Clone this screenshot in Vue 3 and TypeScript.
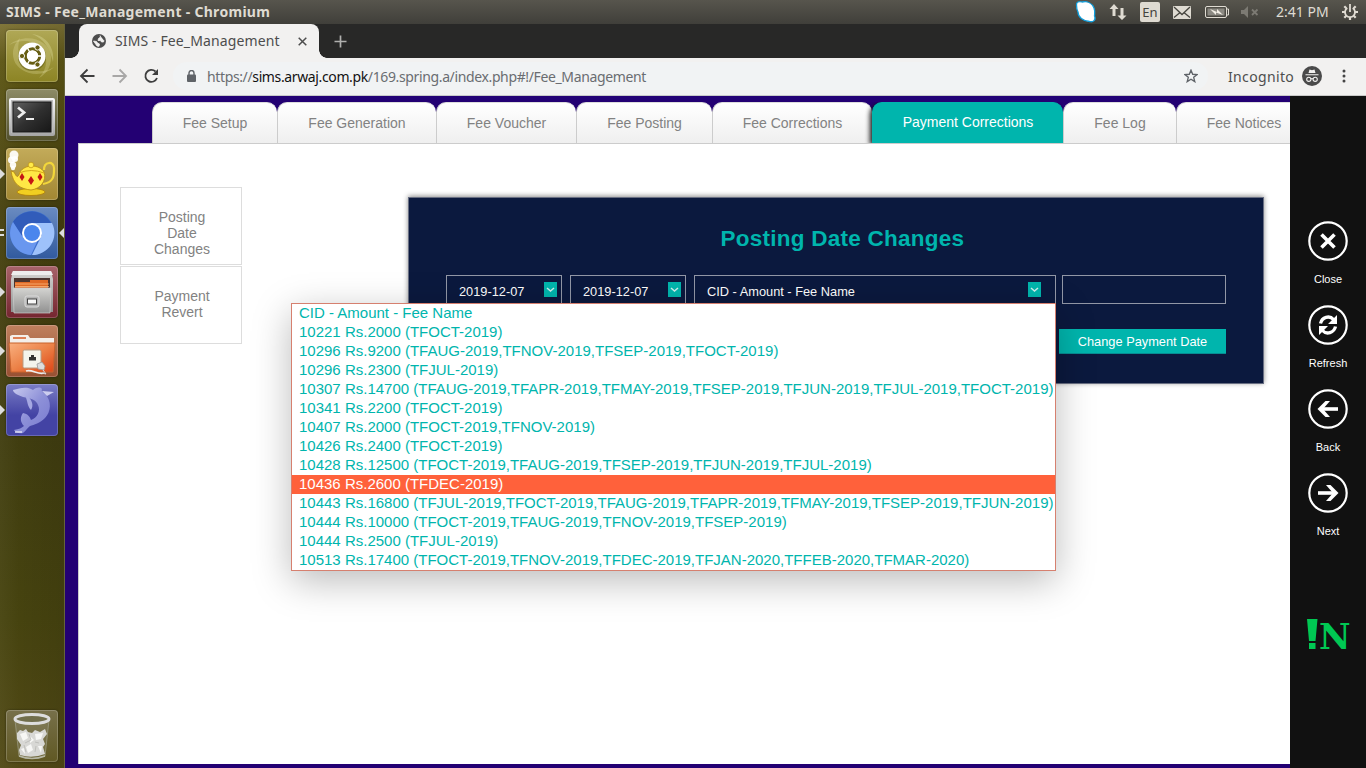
<script setup lang="ts">
interface Tab { label: string; width: number; active?: boolean }

const tabs: Tab[] = [
  { label: 'Fee Setup', width: 125 },
  { label: 'Fee Generation', width: 159 },
  { label: 'Fee Voucher', width: 140 },
  { label: 'Fee Posting', width: 136 },
  { label: 'Fee Corrections', width: 160 },
  { label: 'Payment Corrections', width: 191, active: true },
  { label: 'Fee Log', width: 113 },
  { label: 'Fee Notices', width: 135 },
]

const options: string[] = [
  'CID - Amount - Fee Name',
  '10221 Rs.2000 (TFOCT-2019)',
  '10296 Rs.9200 (TFAUG-2019,TFNOV-2019,TFSEP-2019,TFOCT-2019)',
  '10296 Rs.2300 (TFJUL-2019)',
  '10307 Rs.14700 (TFAUG-2019,TFAPR-2019,TFMAY-2019,TFSEP-2019,TFJUN-2019,TFJUL-2019,TFOCT-2019)',
  '10341 Rs.2200 (TFOCT-2019)',
  '10407 Rs.2000 (TFOCT-2019,TFNOV-2019)',
  '10426 Rs.2400 (TFOCT-2019)',
  '10428 Rs.12500 (TFOCT-2019,TFAUG-2019,TFSEP-2019,TFJUN-2019,TFJUL-2019)',
  '10436 Rs.2600 (TFDEC-2019)',
  '10443 Rs.16800 (TFJUL-2019,TFOCT-2019,TFAUG-2019,TFAPR-2019,TFMAY-2019,TFSEP-2019,TFJUN-2019)',
  '10444 Rs.10000 (TFOCT-2019,TFAUG-2019,TFNOV-2019,TFSEP-2019)',
  '10444 Rs.2500 (TFJUL-2019)',
  '10513 Rs.17400 (TFOCT-2019,TFNOV-2019,TFDEC-2019,TFJAN-2020,TFFEB-2020,TFMAR-2020)',
]
const highlighted = 9

const actions: string[] = ['Close', 'Refresh', 'Back', 'Next']
</script>

<template>
  <div class="desktop">
    <header class="menubar">
      <span class="wintitle">SIMS - Fee_Management - Chromium</span>
      <div class="tray">
        <svg class="t-skype" width="24" height="24" viewBox="0 0 24 24">
          <path d="M2.500 5C2 2 5 1 8 2C13 1 18 3 20 8C21.500 12 20.500 14 20.500 16C22.500 20 19 22.500 15.500 21.500C9 21 4 17 4 12C2.500 9 2.500 8 2.500 5Z" fill="#fff" stroke="#129fdc" stroke-width="1.300" />
        </svg>
        <svg class="t-net" width="18" height="16" viewBox="0 0 18 16">
          <path d="M5 0L9.500 5H6.500V12H3.500V5H.5ZM13 16L8.500 11.500H11.500V4H14.500V11.500H17.500Z" fill="#dfdbd2" />
        </svg>
        <span class="t-en">En</span>
        <svg class="t-mail" width="18" height="13" viewBox="0 0 18 13">
          <rect width="18" height="13" rx="1" fill="#dfdbd2" />
          <path d="M1 1L9 8.500L17 1M1 11.500L6.500 7M17 11.500L11.500 7" fill="none" stroke="#45443e" stroke-width="1.300" />
        </svg>
        <svg class="t-bat" width="24" height="12" viewBox="0 0 24 12">
          <rect x=".5" y=".5" width="21" height="11" rx="1.500" fill="none" stroke="#dfdbd2" />
          <rect x="2.500" y="2.500" width="17" height="7" fill="#8b8982" />
          <path d="M22 3H23.500V9H22" fill="none" stroke="#dfdbd2" />
          <path d="M5 3L12 6V3L18 9L11 6.500V9Z" fill="#f2eee5" />
        </svg>
        <svg class="t-vol" width="18" height="12" viewBox="0 0 18 12">
          <path d="M0 4H3L7 0V12L3 8H0Z" fill="#7c7a73" />
          <path d="M11 3.500L16.500 9M16.500 3.500L11 9" stroke="#7c7a73" stroke-width="1.800" />
        </svg>
        <span class="clock">2:41 PM</span>
        <svg class="t-gear" width="16" height="16" viewBox="0 0 16 16">
          <path d="M8 13V16M0 8H3M13 8H16M2.300 2.300L4.300 4.300M11.700 11.700L13.700 13.700M2.300 13.700L4.300 11.700M11.700 4.300L13.700 2.300" stroke="#dfdbd2" stroke-width="2.200" />
          <path d="M5.300 4A5 5 0 1 0 10.700 4M8 0V8" fill="none" stroke="#dfdbd2" stroke-width="1.800" />
        </svg>
      </div>
    </header>

    <div class="workspace">
      <aside class="launcher">
        <div class="tile ubuntu">
          <svg viewBox="0 0 52 52">
            <g fill="#f0edb4">
              <path d="M3 15C17 3 43 7 45 27C45 38 40 44 33 48C42 38 42 27 36 19C28 9 15 9 3 15Z" fill-opacity=".25" />
              <path d="M48 37C35 50 12 43 8 30C5 20 9 13 14 8C10 19 13 31 22 37C31 43 40 42 48 37Z" fill-opacity=".25" />
              <path d="M26 4C42 6 49 20 47 32C44 18 38 9 26 4Z" fill-opacity=".3" />
            </g>
            <circle cx="26" cy="27" r="14" fill="#625d10" fill-opacity=".6" />
            <circle cx="26" cy="26" r="13.500" fill="#fff" />
            <circle cx="26.500" cy="26" r="7.200" fill="none" stroke="#665d12" stroke-width="3" />
            <path d="M26 26H38M26 26L20 15.500M26 26L20 36.500" stroke="#fff" stroke-width="1.400" />
            <circle cx="26.500" cy="26" r="5.500" fill="#fff" />
            <g fill="#665d12" stroke="#fff" stroke-width=".9">
              <circle cx="16" cy="26" r="2.600" /><circle cx="31.500" cy="17.500" r="2.600" /><circle cx="31.500" cy="34.500" r="2.600" />
            </g>
          </svg>
        </div>
        <div class="tile term">
          <svg viewBox="0 0 52 52">
            <defs>
              <linearGradient id="scr" x1="0" y1="0" x2="1" y2="1"><stop offset="0" stop-color="#626262" /><stop offset=".5" stop-color="#303030" /><stop offset="1" stop-color="#171717" /></linearGradient>
              <linearGradient id="frm" x1="0" y1="0" x2="0" y2="1"><stop offset="0" stop-color="#fafafa" /><stop offset="1" stop-color="#a5a5a5" /></linearGradient>
            </defs>
            <rect x="3" y="9" width="46" height="38" rx="2" fill="url(#frm)" />
            <rect x="5" y="11" width="42" height="33" fill="#bcbcbc" />
            <rect x="7" y="13" width="38" height="30" fill="url(#scr)" stroke="#161616" />
            <path d="M12 18.500L18 23.500L12 28.500" fill="none" stroke="#eee" stroke-width="2.800" />
            <path d="M20 30H28" stroke="#eee" stroke-width="2" />
          </svg>
        </div>
        <div class="tile lamp">
          <i class="mark left"></i>
          <svg viewBox="0 0 52 52">
            <g fill="#fff" fill-opacity=".92"><circle cx="8" cy="7" r="4.500" /><circle cx="5.500" cy="12" r="3.500" /><circle cx="9" cy="11" r="3" /><circle cx="7" cy="17" r="3.200" /><circle cx="7" cy="20" r="2.200" /></g>
            <path d="M38 22C38 13 48 13 48 20C48 26 49 34 37 36" fill="none" stroke="#f2d63b" stroke-width="2.200" />
            <ellipse cx="25" cy="44" rx="14" ry="3.500" fill="#f1cf21" stroke="#a77606" stroke-width=".7" />
            <path d="M5 23L8 24C11 30 12 30 14 24C19 16 33 16 38 24C41 33 34 41 25 42C15 41 7 37 5 23Z" fill="#ffe745" stroke="#b58812" stroke-width=".8" />
            <path d="M13 25Q25 20 38 25" fill="none" stroke="#d6a719" />
            <circle cx="25" cy="17" r="2.800" fill="#ffea48" stroke="#b48409" stroke-width=".6" />
            <path d="M16 25L18.500 29L16 33L13.500 29ZM25 28L28 32.500L25 37L22 32.500ZM34 25L36.500 29L34 33L31.500 29Z" fill="#c51614" />
          </svg>
        </div>
        <div class="tile chromium">
          <i class="mark double"></i><i class="mark right"></i>
          <svg viewBox="0 0 52 52">
            <circle cx="26" cy="26" r="22" fill="#3e70cd" />
            <path d="M7 15A22 22 0 0 1 45 16L26 16L16 29Z" fill="#315cba" />
            <path d="M26 16H46A22 22 0 0 1 26 48L36 28Z" fill="#9ec2fb" />
            <path d="M7 15L18 32L31 35L25 48A22 22 0 0 1 7 15Z" fill="#6997ef" />
            <circle cx="26" cy="26" r="10" fill="#fff" /><circle cx="26" cy="26" r="8" fill="#4a86ed" />
          </svg>
        </div>
        <div class="tile files">
          <i class="mark left"></i>
          <svg viewBox="0 0 52 52">
            <defs><linearGradient id="cab" x1="0" y1="0" x2="0" y2="1"><stop offset="0" stop-color="#d4d4d1" /><stop offset="1" stop-color="#909090" /></linearGradient></defs>
            <path d="M7 5H45L47 13V46H5V13Z" fill="url(#cab)" /><path d="M7 5H45L47 9H5Z" fill="#eee" />
            <rect x="8" y="12" width="36" height="11" fill="#4b3530" />
            <path d="M9 16H24V14H42V22H9Z" fill="#df6925" /><path d="M9 18H43M9 20.500H43" stroke="#ffc489" stroke-width=".7" />
            <path d="M7 22H45L44 47H8Z" fill="url(#cab)" stroke="#ccc" stroke-width=".7" />
            <rect x="19" y="30" width="14" height="11" rx="2" fill="#b4b4b4" stroke="#ddd" />
            <rect x="21.500" y="33" width="9" height="5" fill="#f8f8f8" stroke="#444" />
          </svg>
        </div>
        <div class="tile share">
          <i class="mark left"></i>
          <svg viewBox="0 0 52 52">
            <defs><linearGradient id="fold" x1="0" y1="0" x2="1" y2="1"><stop offset="0" stop-color="#f9b080" /><stop offset=".5" stop-color="#ec8248" /><stop offset="1" stop-color="#dd4315" /></linearGradient></defs>
            <path d="M4 19V11L6 10H22L24 13H48V19Z" fill="#f4efea" /><path d="M7 13H20" stroke="#dd8057" stroke-width="2" />
            <path d="M3 18H49L47 47H5Z" fill="url(#fold)" stroke="#c8622c" />
            <rect x="17" y="25" width="18" height="18" rx="1.500" fill="#f4f4ec" stroke="#b89c83" />
            <path d="M23 35.500V32H25V30H28V32H30V35.500Z" fill="#333" />
            <path d="M38 48C32 50 26 44 20 46" fill="none" stroke="#eee" stroke-width="1.600" />
            <path d="M31 39L36 37L39 41L38 45L32 44Z" fill="#ddd" stroke="#999" stroke-width=".8" /><path d="M37 45L40 49L36 48" fill="none" stroke="#ddd" />
          </svg>
        </div>
        <div class="tile dolphin">
          <i class="mark left"></i>
          <svg viewBox="0 0 52 52">
            <defs><linearGradient id="dol" x1="0" y1="0" x2="1" y2="1"><stop offset="0" stop-color="#c7c9ee" /><stop offset=".5" stop-color="#8d90d8" /><stop offset="1" stop-color="#7779cf" /></linearGradient></defs>
            <path d="M7 6C14 4 21 2 27 6C31 3 34 3 36 5C35 7 36 8 39 10C46 17 45 28 39 34C34 39 28 41 24 42C21 44 20 47 17 49C13 50 9 48 8 46C13 45 16 44 18 42C14 38 14 33 17 29C22 30 24 33 25 36C31 34 35 27 32 21C30 16 25 14 17 13C12 11 7 9 7 6Z" fill="url(#dol)" />
            <path d="M22 12C26 17 28 21 25 26C21 22 22 17 19 12Z" fill="#a5a8e2" />
            <path d="M36 7L48 8L41 12Z" fill="#cccdef" /><path d="M9 48L16 48" stroke="#dedff4" stroke-width="1.500" />
          </svg>
        </div>
        <div class="tile trash">
          <svg viewBox="0 0 52 52">
            <path d="M9 10L13 46Q26 51 39 46L43 10Z" fill="#c5c5b9" fill-opacity=".15" stroke="#a1a18a" stroke-width=".7" />
            <ellipse cx="26" cy="9" rx="17" ry="4.500" fill="#716e4c" stroke="#ddd" stroke-width="3" />
            <path d="M11 23L14 20L17 21L20 19L22 22L26 23L29 20L34 22L39 19L41 24L37 29L39 34L37 37L39 44Q26 49 14 45L13 40L15 35L11 29Z" fill="#d8d8d5" />
            <path d="M14 24L20 22L22 28L17 31ZM29 24L37 23L35 29L30 30ZM20 37L25 34L27 40L22 43ZM32 36L36 36L35 43ZM24 26L28 30L24 33ZM15 39L18 38L19 44Z" fill="#f7f7f5" />
            <path d="M23 24L25 30L19 33M29 32L33 33M18 35L20 42M30 36L29 42" fill="none" stroke="#b8b8b4" stroke-width=".8" />
            <path d="M13 46Q26 51 39 46" fill="none" stroke="#b7b7a5" stroke-width="1.500" />
          </svg>
        </div>
      </aside>

      <div class="browser">
        <div class="tabstrip">
          <div class="btab">
            <svg class="globe" width="14" height="14" viewBox="0 0 14 14"><circle cx="7" cy="7" r="7" fill="#4d4d4d" /><path d="M8 1.500L8.500 3L6.500 4.500L6 6.500H8.500L9.500 8L11.500 8L12 6.500M1.500 7L4.500 7.500L5.500 9L7.500 10L7 12.300L5 12Z" fill="#f2f1f0" stroke="#f2f1f0" stroke-width=".8" /></svg>
            <span class="btitle">SIMS - Fee_Management</span>
            <svg class="bclose" width="9" height="9" viewBox="0 0 9 9"><path d="M.7 .7L8.300 8.300M8.300 .7L.7 8.300" stroke="#4d4d4d" stroke-width="1.500" /></svg>
          </div>
          <svg class="plus" width="13" height="13" viewBox="0 0 13 13"><path d="M6.500 .5V12.500M.5 6.500H12.500" stroke="#b0b0ae" stroke-width="1.700" /></svg>
        </div>
        <div class="toolbar">
          <svg class="nav" width="86" height="18" viewBox="0 0 86 18" fill="none" stroke-width="1.800">
            <path d="M15.500 9H2M8.500 2.500L2 9L8.500 15.500" stroke="#3e3e3e" />
            <path d="M33.500 9H47M40.500 2.500L47 9L40.500 15.500" stroke="#a8a7a6" />
            <path d="M76.500 4.500A6 6 0 1 0 78 11" stroke="#3e3e3e" /><path d="M79 2V8H73Z" fill="#3e3e3e" />
          </svg>
          <div class="omnibox">
            <svg class="lock" width="9" height="12" viewBox="0 0 9 12"><rect y="4.500" width="9" height="7.500" rx="1" fill="#5f6368" /><path d="M2 5V3A2.500 2.500 0 0 1 7 3V5" fill="none" stroke="#5f6368" stroke-width="1.400" /></svg>
            <span class="url">https://<b>sims.arwaj.com.pk</b>/169.spring.a/index.php#!/Fee_Management</span>
            <svg class="star" width="14" height="14" viewBox="0 0 24 24"><path d="M12 2L14.900 9L22.500 9.500L16.600 14.300L18.500 21.700L12 17.600L5.500 21.700L7.400 14.300L1.500 9.500L9.100 9Z" fill="none" stroke="#5f6368" stroke-width="2.300" /></svg>
          </div>
          <span class="incog">Incognito</span>
          <svg class="spy" width="20" height="20" viewBox="0 0 20 20"><circle cx="10" cy="10" r="10" fill="#4a4a4a" /><path d="M6.500 7L7.500 3.500L10 4.200L12.500 3.500L13.500 7ZM3.500 8.200H16.500V9.200H3.500Z" fill="#f2f1f0" /><g fill="none" stroke="#f2f1f0" stroke-width="1.100"><circle cx="6.800" cy="13.300" r="2.100" /><circle cx="13.200" cy="13.300" r="2.100" /><path d="M9 13Q10 12.200 11 13" /></g></svg>
          <svg class="dots" width="4" height="14" viewBox="0 0 4 14" fill="#454545"><circle cx="2" cy="2" r="1.500" /><circle cx="2" cy="7" r="1.500" /><circle cx="2" cy="12" r="1.500" /></svg>
        </div>

        <div class="page">
          <main class="app">
            <nav class="tabs">
              <div v-for="t in tabs" :key="t.label" class="tab" :class="{ active: t.active }" :style="{ width: t.width + 'px' }">{{ t.label }}</div>
            </nav>
            <section class="content">
              <div class="submenu">
                <div class="sub">Posting<br>Date<br>Changes</div>
                <div class="sub">Payment<br>Revert</div>
              </div>
              <div class="panel">
                <h1>Posting Date Changes</h1>
                <div class="fields">
                  <div v-for="n in 2" :key="n" class="field date"><span>2019-12-07</span>
                    <svg class="arrow" width="13" height="15" viewBox="0 0 13 15"><rect width="13" height="15" fill="#00b5ad" /><path d="M3 6L6.500 9L10 6" fill="none" stroke="#cdeeed" stroke-width="1.500" /></svg>
                  </div>
                  <div class="field fee"><span>CID - Amount - Fee Name</span>
                    <svg class="arrow" width="13" height="15" viewBox="0 0 13 15"><rect width="13" height="15" fill="#00b5ad" /><path d="M3 6L6.500 9L10 6" fill="none" stroke="#cdeeed" stroke-width="1.500" /></svg>
                    <div class="dropdown">
                      <div v-for="(o, i) in options" :key="o" class="option" :class="{ on: i === highlighted }">{{ o }}</div>
                    </div>
                  </div>
                  <div class="field blank"></div>
                </div>
                <div class="submit"><button type="button">Change Payment Date</button></div>
              </div>
            </section>
          </main>
          <aside class="sidebar">
            <div v-for="a in actions" :key="a" class="action">
              <svg width="40" height="40" viewBox="0 0 40 40" fill="none" stroke="#fff">
                <circle cx="20" cy="20" r="18.700" stroke-width="2.200" />
                <path v-if="a === 'Close'" d="M13.500 13.500L26.500 26.500M26.500 13.500L13.500 26.500" stroke-width="3.600" />
                <g v-else-if="a === 'Refresh'">
                  <path d="M12.500 18.500C14 12 21.500 10 25.500 14.500M27.500 21.500C26 28 18.500 30 14.500 25.500" stroke-width="3.300" />
                  <path d="M29 10V19H20ZM11 30V21H20Z" fill="#fff" stroke="none" />
                </g>
                <path v-else-if="a === 'Back'" d="M30 20H12" stroke-width="3.600" />
                <path v-else d="M10 20H28" stroke-width="3.600" />
                <path v-if="a === 'Back'" d="M17.500 12H22L15 20L22 28H17.500L9.500 20Z" fill="#fff" stroke="none" />
                <path v-if="a === 'Next'" d="M22.500 12H18L25 20L18 28H22.500L30.500 20Z" fill="#fff" stroke="none" />
              </svg>
              <span>{{ a }}</span>
            </div>
            <div class="brand">
              <svg width="11" height="31" viewBox="0 0 11 31" fill="#00c853"><path d="M0 0H10.500L8.500 22H2ZM2 24H8.500V30H2Z" /></svg>
              <span class="en">N</span>
            </div>
          </aside>
        </div>
      </div>
    </div>
  </div>
</template>

<style>
body { overflow: hidden; }
</style>

<style scoped>
* { box-sizing: border-box; }
.desktop { width: 1366px; height: 768px; display: flex; flex-direction: column; overflow: hidden; font-family: "Liberation Sans", Arial, sans-serif; }
svg { display: block; flex: none; }
.menubar { height: 24px; flex: none; display: flex; align-items: center; justify-content: space-between; padding: 0 8px 0 6px; color: #dfdbd2; background: linear-gradient(#57554d, #403f3a); font-family: "Noto Sans", sans-serif; white-space: nowrap; }
.wintitle { font-size: 14px; font-weight: 700; line-height: 24px; letter-spacing: .3px; }
.tray { display: flex; align-items: center; height: 24px; }
.t-net { margin-left: 11px; }
.t-en { width: 20px; height: 20px; margin-left: 13px; border-radius: 2px; background: #dfdbd2; color: #45443e; font-size: 13px; line-height: 20px; text-align: center; }
.t-mail { margin-left: 13px; }
.t-bat { margin-left: 14px; }
.t-vol { margin-left: 12px; }
.clock { width: 53px; margin-left: 17px; font-size: 14px; line-height: 24px; }
.t-gear { margin-left: 13px; }

.workspace { flex: 1; display: flex; min-height: 0; }
.launcher { width: 65px; flex: none; display: flex; flex-direction: column; gap: 7px; padding: 6px 7px 6px 6px; border-right: 1px solid #66633c; background: linear-gradient(90deg, rgba(255,255,220,.04), transparent 30%, rgba(0,0,0,.08)), linear-gradient(#7c7135 0, #5c5514 5%, #46400f 25%, #403d10 55%, #46430f 80%, #514916 100%); }
.tile { position: relative; width: 52px; height: 52px; flex: none; border-radius: 4px; box-shadow: inset 0 0 0 1px rgba(255,255,255,.2), 0 0 2px rgba(0,0,0,.5); }
.tile svg { width: 52px; height: 52px; }
.ubuntu { background: linear-gradient(#b0a856, #8c8424); }
.term { background: linear-gradient(#8d8b66, #514f2b); }
.lamp { background: linear-gradient(#c3ab5a, #a28732); }
.chromium { background: linear-gradient(#6a8bc1, #315a9e); }
.files { background: linear-gradient(#a8636a, #74252f); }
.share { background: linear-gradient(#bf805e, #985032); }
.dolphin { background: linear-gradient(#7a7dc5, #4343a4 60%); }
.trash { margin-top: auto; background: linear-gradient(#77704a, #605823); }
.mark { position: absolute; top: 21px; width: 0; height: 0; border: 5px solid transparent; }
.mark.left { left: -6px; border-left: 5px solid #ddd; border-right: 0; }
.mark.right { right: -6px; border-right: 5px solid #ddd; border-left: 0; }
.mark.double { left: -6px; top: 22px; width: 4px; height: 7px; border: solid #ddd; border-width: 2px 0; }

.browser { flex: 1; min-width: 0; display: flex; flex-direction: column; font-family: "Noto Sans", sans-serif; }
.tabstrip { height: 34px; flex: none; display: flex; align-items: center; padding-left: 14px; background: #282827; }
.btab { position: relative; width: 240px; height: 34px; display: flex; align-items: center; padding-left: 13px; border-radius: 8px 8px 0 0; background: #f2f1f0; color: #4d4d4d; }
.btab::before, .btab::after { content: ""; position: absolute; bottom: 0; width: 8px; height: 8px; }
.btab::before { left: -8px; background: radial-gradient(circle at 0 0, transparent 7.5px, #f2f1f0 8px); }
.btab::after { right: -8px; background: radial-gradient(circle at 100% 0, transparent 7.5px, #f2f1f0 8px); }
.btitle { width: 166px; margin-left: 9px; font-size: 14px; line-height: 34px; letter-spacing: .12px; white-space: nowrap; }
.bclose { margin-left: 17px; }
.plus { margin-left: 15px; }
.toolbar { height: 38px; flex: none; display: flex; align-items: center; padding-bottom: 1px; background: #f2f1f0; border-bottom: 1px solid #c9c9c8; color: #4d4d4d; }
.nav { margin-left: 14px; }
.omnibox { width: 1035px; height: 28px; flex: none; margin-left: 8px; display: flex; align-items: center; border-radius: 14px; padding-left: 14px; background: #f1f3f4; }
.url { width: 460px; margin-left: 11px; font-size: 14px; letter-spacing: -.37px; white-space: nowrap; color: #6a6d71; }
.url b { font-weight: 400; color: #111; }
.star { margin-left: 517px; }
.incog { width: 68px; margin-left: 20px; font-size: 14px; letter-spacing: .35px; }
.spy { margin-left: 6px; }
.dots { margin-left: 20px; }

.page { flex: 1; min-height: 0; display: flex; font-family: "Liberation Sans", Arial, sans-serif; }
.app { width: 1225px; flex: none; display: flex; flex-direction: column; overflow: hidden; padding: 6px 0 4px 13px; background: #230073; }
.tabs { height: 41px; flex: none; display: flex; padding-left: 74px; }
.tab { height: 41px; flex: none; border-left: 1px solid #ccc; border-top: 1px solid #ddd; border-radius: 10px 10px 0 0; background: linear-gradient(#fff, #efefef); color: #828282; font-size: 14px; line-height: 40px; text-align: center; }
.tab.active { position: relative; border-color: #00b5ad; background: #00b5ad; color: #fff; line-height: 38px; box-shadow: -2px 2px 5px #111; clip-path: inset(0 0 0 -8px); }
.content { flex: 1; display: flex; align-items: flex-start; border-top: 1px solid #ccc; border-left: 1px solid #ccc; background: #fff; }
.submenu { display: flex; flex-direction: column; gap: 1px; margin: 43px 0 0 41px; width: 122px; flex: none; }
.sub { height: 78px; border: 1px solid #ddd; padding: 21px 0 0 2px; text-align: center; color: #828282; font-size: 14px; line-height: 16px; }
.panel { width: 856px; height: 187px; margin: 53px 0 0 166px; flex: none; border: 1px solid #686e82; padding: 28px 37px 0; background: #0b193e; box-shadow: 0 -1px 5px rgba(0,0,0,.45); }
h1 { margin: 0 0 24px; padding-left: 13px; font-size: 22.5px; letter-spacing: .25px; line-height: 25px; font-weight: 700; color: #00b5ad; text-align: center; }
.fields { display: flex; }
.field { position: relative; flex: none; height: 29px; border: 1px solid #9297a6; color: #fff; font-size: 12.8px; line-height: 32px; padding-left: 12px; display: flex; }
.date { width: 116px; margin-right: 8px; }
.fee { width: 362px; margin-right: 6px; }
.blank { width: 164px; }
.arrow { margin: 6px 4px 0 auto; }
.fee .arrow { margin-right: 14px; }
.dropdown { position: absolute; right: -1px; top: 27px; z-index: 5; width: 765px; height: 268px; border: 1px solid #d6806f; background: #fff; box-shadow: 0 10px 36px rgba(0,0,0,.27); }
.option { height: 19px; padding-left: 7px; font-size: 15px; line-height: 18px; color: #00b5ad; white-space: nowrap; }
.option.on { background: #ff613b; color: #fff; }
.submit { display: flex; justify-content: flex-end; margin-top: 25px; }
button { width: 167px; height: 25px; border: 0; border-bottom: 1px solid #078d92; padding: 0; background: #00b5ad; color: #fff; font: 12.8px/25px "Liberation Sans", Arial, sans-serif; }

.sidebar { flex: 1; display: flex; flex-direction: column; align-items: center; padding-top: 125px; background: #111; }
.action { height: 84px; flex: none; display: flex; flex-direction: column; align-items: center; color: #fff; font-size: 11px; }
.action span { margin-top: 12px; line-height: 13px; }
.brand { display: flex; align-items: flex-start; margin-top: 62px; padding-left: 3px; color: #00c853; }
.en { margin-left: 1px; font: 700 36px/34px "DejaVu Serif", serif; transform: scaleX(.96); transform-origin: left; }
</style>
